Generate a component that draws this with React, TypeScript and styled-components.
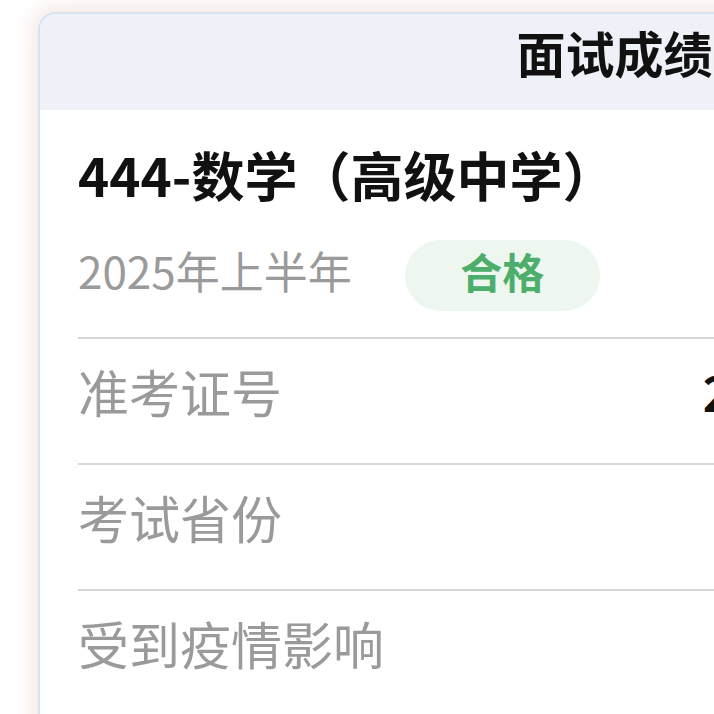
import React from "react";
import styled, { createGlobalStyle } from "styled-components";

const Global = createGlobalStyle`
  html, body { margin: 0; padding: 0; background: #ffffff; overflow: hidden; }
  body { font-family: "Noto Sans CJK SC", "Noto Sans", sans-serif; }
  * { box-sizing: border-box; }
`;

const Page = styled.div`
  padding: 12px 0 0 38px;
  width: 1400px;
`;

const Card = styled.section`
  width: 1153px;
  background: #ffffff;
  border: 2px solid #d9e3ef;
  border-radius: 18px;
  box-shadow: 0 0 18px 6px rgba(235, 215, 205, 0.55);
  overflow: hidden;
`;

const Header = styled.header`
  height: 96px;
  background: #eef1f7;
  display: flex;
  align-items: flex-start;
  justify-content: center;
  padding-top: 13px;
`;

const HeaderTitle = styled.h1`
  margin: 0;
  font-size: 49px;
  font-weight: 700;
  color: #111111;
  line-height: 1;
`;

const Body = styled.div`
  padding: 0 38px;
`;

const Summary = styled.div`
  padding: 32px 0 26px;
  border-bottom: 2px solid #d6d6d6;
  display: flex;
  flex-direction: column;
  gap: 34px;
`;

const Subject = styled.h2`
  margin: 0;
  font-size: 53px;
  font-weight: 700;
  color: #111111;
  line-height: 64px;
`;

const MetaRow = styled.div`
  display: flex;
  align-items: center;
  gap: 53px;
`;

const Term = styled.span`
  font-size: 44px;
  color: #9a9a9a;
  line-height: 1;
  padding-bottom: 12px;
`;

const Badge = styled.span<{ $tone: "pass" | "fail" }>`
  width: 195px;
  height: 71px;
  border-radius: 36px;
  display: flex;
  align-items: center;
  justify-content: center;
  padding-bottom: 10px;
  background: ${(p) => (p.$tone === "pass" ? "#edf7ef" : "#fdeeee")};
  color: ${(p) => (p.$tone === "pass" ? "#4cae6a" : "#e05555")};
  font-size: 42px;
  font-weight: 700;
  line-height: 1;
`;

const Row = styled.div`
  height: 126px;
  display: flex;
  align-items: center;
  justify-content: space-between;
  padding-bottom: 20px;
  border-bottom: 2px solid #d6d6d6;
`;

const Label = styled.span`
  font-size: 51px;
  color: #9a9a9a;
  line-height: 1;
`;

const Value = styled.span`
  font-size: 48px;
  font-weight: 700;
  letter-spacing: -0.3px;
  color: #111111;
  line-height: 1;
`;

const rows = [
  { label: "准考证号", value: "2544410001234567" },
  { label: "考试省份", value: "广东省" },
  { label: "受到疫情影响", value: "否" },
  { label: "面试成绩", value: "合格" },
];

export default function App() {
  return (
    <>
      <Global />
      <Page>
        <Card>
          <Header>
            <HeaderTitle>面试成绩</HeaderTitle>
          </Header>
          <Body>
            <Summary>
              <Subject>444-数学（高级中学）</Subject>
              <MetaRow>
                <Term>2025年上半年</Term>
                <Badge $tone="pass">合格</Badge>
              </MetaRow>
            </Summary>
            {rows.map((r) => (
              <Row key={r.label}>
                <Label>{r.label}</Label>
                <Value>{r.value}</Value>
              </Row>
            ))}
          </Body>
        </Card>
      </Page>
    </>
  );
}
